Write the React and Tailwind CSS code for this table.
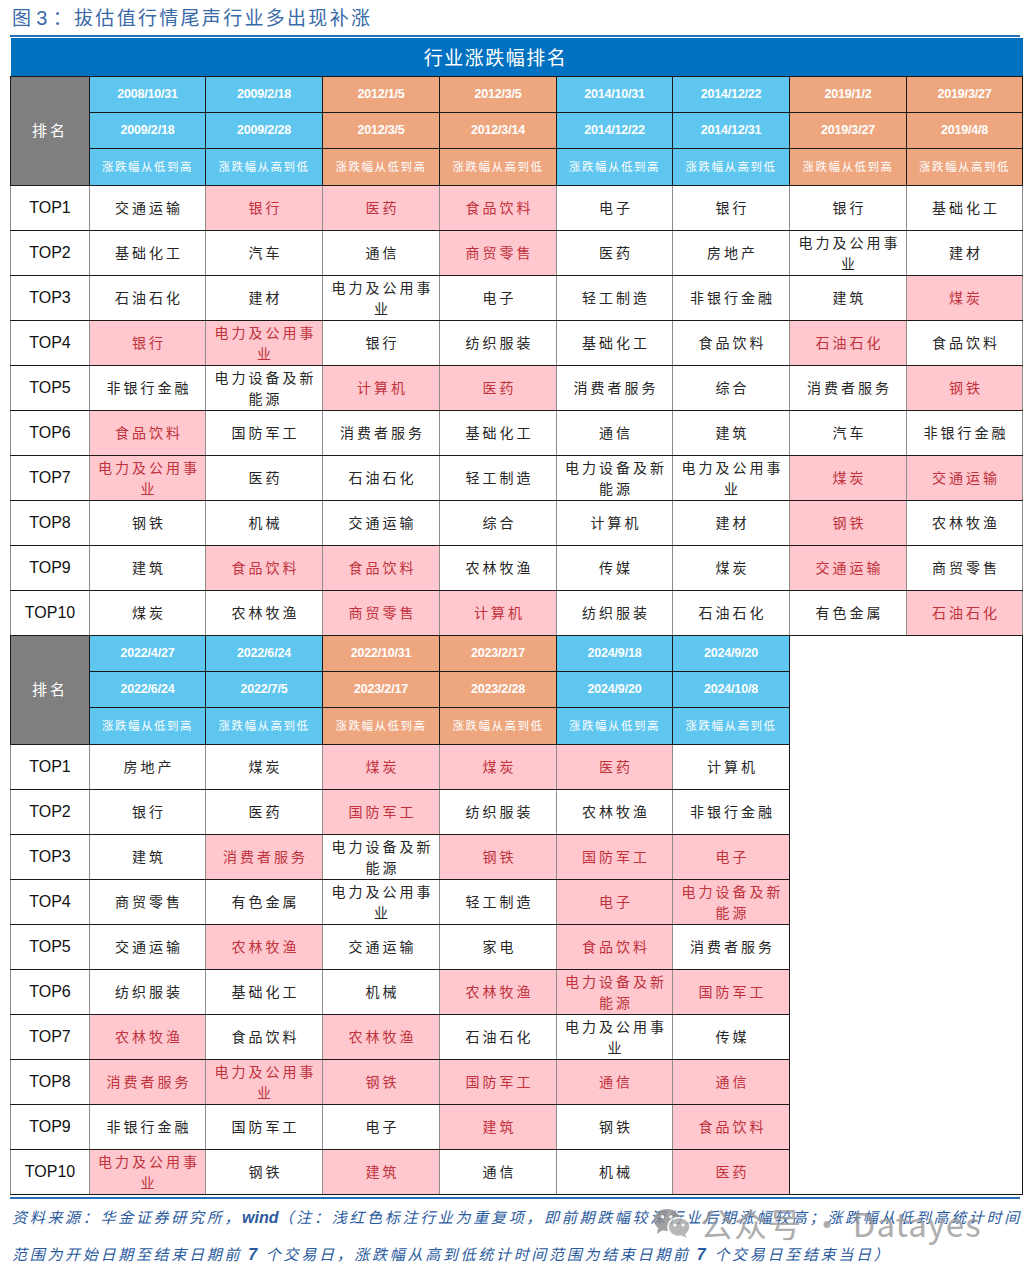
import React from 'react';

const S = '*'; // marks a repeated industry (pink cell)

const sections = [
  {
    cols: [
      { from: '2008/10/31', to: '2009/2/18', up: true, tone: 'blue' },
      { from: '2009/2/18', to: '2009/2/28', up: false, tone: 'blue' },
      { from: '2012/1/5', to: '2012/3/5', up: true, tone: 'orange' },
      { from: '2012/3/5', to: '2012/3/14', up: false, tone: 'orange' },
      { from: '2014/10/31', to: '2014/12/22', up: true, tone: 'blue' },
      { from: '2014/12/22', to: '2014/12/31', up: false, tone: 'blue' },
      { from: '2019/1/2', to: '2019/3/27', up: true, tone: 'orange' },
      { from: '2019/3/27', to: '2019/4/8', up: false, tone: 'orange' },
    ],
    rows: [
      ['交通运输', S + '银行', S + '医药', S + '食品饮料', '电子', '银行', '银行', '基础化工'],
      ['基础化工', '汽车', '通信', S + '商贸零售', '医药', '房地产', '电力及公用事业', '建材'],
      ['石油石化', '建材', '电力及公用事业', '电子', '轻工制造', '非银行金融', '建筑', S + '煤炭'],
      [S + '银行', S + '电力及公用事业', '银行', '纺织服装', '基础化工', '食品饮料', S + '石油石化', '食品饮料'],
      ['非银行金融', '电力设备及新能源', S + '计算机', S + '医药', '消费者服务', '综合', '消费者服务', S + '钢铁'],
      [S + '食品饮料', '国防军工', '消费者服务', '基础化工', '通信', '建筑', '汽车', '非银行金融'],
      [S + '电力及公用事业', '医药', '石油石化', '轻工制造', '电力设备及新能源', '电力及公用事业', S + '煤炭', S + '交通运输'],
      ['钢铁', '机械', '交通运输', '综合', '计算机', '建材', S + '钢铁', '农林牧渔'],
      ['建筑', S + '食品饮料', S + '食品饮料', '农林牧渔', '传媒', '煤炭', S + '交通运输', '商贸零售'],
      ['煤炭', '农林牧渔', S + '商贸零售', S + '计算机', '纺织服装', '石油石化', '有色金属', S + '石油石化'],
    ],
  },
  {
    cols: [
      { from: '2022/4/27', to: '2022/6/24', up: true, tone: 'blue' },
      { from: '2022/6/24', to: '2022/7/5', up: false, tone: 'blue' },
      { from: '2022/10/31', to: '2023/2/17', up: true, tone: 'orange' },
      { from: '2023/2/17', to: '2023/2/28', up: false, tone: 'orange' },
      { from: '2024/9/18', to: '2024/9/20', up: true, tone: 'blue' },
      { from: '2024/9/20', to: '2024/10/8', up: false, tone: 'blue' },
    ],
    rows: [
      ['房地产', '煤炭', S + '煤炭', S + '煤炭', S + '医药', '计算机'],
      ['银行', '医药', S + '国防军工', '纺织服装', '农林牧渔', '非银行金融'],
      ['建筑', S + '消费者服务', '电力设备及新能源', S + '钢铁', S + '国防军工', S + '电子'],
      ['商贸零售', '有色金属', '电力及公用事业', '轻工制造', S + '电子', S + '电力设备及新能源'],
      ['交通运输', S + '农林牧渔', '交通运输', '家电', S + '食品饮料', '消费者服务'],
      ['纺织服装', '基础化工', '机械', S + '农林牧渔', S + '电力设备及新能源', S + '国防军工'],
      [S + '农林牧渔', '食品饮料', S + '农林牧渔', '石油石化', '电力及公用事业', '传媒'],
      [S + '消费者服务', S + '电力及公用事业', S + '钢铁', S + '国防军工', S + '通信', S + '通信'],
      ['非银行金融', '国防军工', '电子', S + '建筑', '钢铁', S + '食品饮料'],
      [S + '电力及公用事业', '钢铁', S + '建筑', '通信', '机械', S + '医药'],
    ],
  },
];

const widths = [79, 116, 117, 117, 117, 116, 117, 117, 116];

const toneBg = { blue: 'bg-[#5ec6ef]', orange: 'bg-[#eea67f]' };

const cjk = "font-['Noto_Sans_CJK_SC',sans-serif]";
const arial = "font-['Liberation_Sans','Noto_Sans_CJK_SC',sans-serif]";

function HeadCell({ tone, children, className = '' }) {
  return (
    <td className={`${toneBg[tone]} border border-[#1a1a1a] text-center text-white p-0 ${className}`}>
      {children}
    </td>
  );
}

function Section({ data }) {
  const extra = 8 - data.cols.length;
  return (
    <>
      <tr className="h-[36px]">
        <td rowSpan={3} className={`bg-[#7f7f7f] border border-[#1a1a1a] text-center text-white text-[15px] tracking-[3px] ${cjk}`}>
          排名
        </td>
        {data.cols.map((c, i) => (
          <HeadCell key={i} tone={c.tone} className={`${arial} font-bold text-[12.5px] tracking-[-0.2px]`}>
            {c.from}
          </HeadCell>
        ))}
        {extra > 0 && <td rowSpan={13} colSpan={extra} className="bg-white border border-[#1a1a1a]" />}
      </tr>
      <tr className="h-[36px]">
        {data.cols.map((c, i) => (
          <HeadCell key={i} tone={c.tone} className={`${arial} font-bold text-[12.5px] tracking-[-0.2px]`}>
            {c.to}
          </HeadCell>
        ))}
      </tr>
      <tr className="h-[37px]">
        {data.cols.map((c, i) => (
          <HeadCell key={i} tone={c.tone} className={`${cjk} text-[11.5px] tracking-[1.5px]`}>
            {c.up ? '涨跌幅从低到高' : '涨跌幅从高到低'}
          </HeadCell>
        ))}
      </tr>
      {data.rows.map((row, r) => (
        <tr key={r} className="h-[45px]">
          <td className={`border-y border-y-[#1a1a1a] border-x border-x-[#8c8c8c] bg-white text-center text-[16px] text-[#111] ${arial}`}>
            TOP{r + 1}
          </td>
          {row.map((name, i) => {
            const hot = name.startsWith(S);
            const label = hot ? name.slice(1) : name;
            return (
              <td
                key={i}
                className={`border-y border-y-[#1a1a1a] border-x border-x-[#8c8c8c] text-center px-[4px] pl-[7px] text-[14px] leading-[21px] tracking-[3px] ${cjk} ${
                  hot ? 'bg-[#ffc7ce] text-[#c0323c]' : 'bg-white text-[#262626]'
                }`}
              >
                {label}
              </td>
            );
          })}
        </tr>
      ))}
    </>
  );
}

function WeChatMark() {
  return (
    <svg width="40" height="32" viewBox="0 0 40 32" className="shrink-0">
      <ellipse cx="15" cy="13" rx="13" ry="11" fill="#8c8c8c" />
      <path d="M6 21 L5 27 L11 23 Z" fill="#8c8c8c" />
      <ellipse cx="27" cy="20" rx="11" ry="9.5" fill="#a6a6a6" stroke="#fff" strokeWidth="1.5" />
      <path d="M33 27 L35 31 L29 28 Z" fill="#a6a6a6" />
      <circle cx="10.5" cy="10" r="1.8" fill="#fff" />
      <circle cx="19" cy="10" r="1.8" fill="#fff" />
      <circle cx="23" cy="18" r="1.5" fill="#fff" />
      <circle cx="31" cy="18" r="1.5" fill="#fff" />
    </svg>
  );
}

export default function App() {
  return (
    <div className="w-[1030px] h-[1269px] bg-white overflow-hidden">
      {/* Figure title */}
      <div className={`h-[35px] pl-[12px] flex items-center text-[#3a6aa8] text-[19px] tracking-[2.3px] ${cjk}`}>
        图 <span className={`${arial} mx-[3px] text-[20px]`}>3</span>：拔估值行情尾声行业多出现补涨
      </div>
      <div className="mx-[10px] h-[2px] bg-[#2a70b8]" />

      {/* Ranking table */}
      <table className="ml-[10px] mt-[1px] w-[1012px] table-fixed border-collapse">
        <colgroup>
          {widths.map((w, i) => (
            <col key={i} style={{ width: w }} />
          ))}
        </colgroup>
        <tbody>
          <tr className="h-[38px]">
            <td colSpan={9} className={`bg-[#0070c0] text-white text-center text-[19px] tracking-[1.5px] pr-[42px] ${cjk}`}>
              行业涨跌幅排名
            </td>
          </tr>
          <Section data={sections[0]} />
          <Section data={sections[1]} />
        </tbody>
      </table>

      {/* Source note */}
      <div className="mx-[10px] mt-[2px] h-[2px] bg-[#2a70b8]" />
      <div className={`relative pl-[12px] pt-0 text-[#2a5a9e] italic text-[15px] leading-[36px] tracking-[2.7px] whitespace-nowrap ${cjk}`}>
        <div>
          资料来源：华金证券研究所，<span className={`${arial} font-bold text-[16px] tracking-normal`}>wind</span>（注：浅红色标注行业为重复项，即前期跌幅较深行业后期涨幅较高；涨跌幅从低到高统计时间
        </div>
        <div>
          范围为开始日期至结束日期前 <span className={`${arial} font-bold text-[16px]`}>7</span> 个交易日，涨跌幅从高到低统计时间范围为结束日期前 <span className={`${arial} font-bold text-[16px]`}>7</span> 个交易日至结束当日）
        </div>
        <div className="absolute left-[652px] top-[6px] flex items-center gap-[8px] opacity-80 not-italic">
          <WeChatMark />
          <span className={`text-[33px] tracking-[1px] text-[#9a9a9a] not-italic ${cjk}`}>公众号 · Datayes</span>
        </div>
      </div>
    </div>
  );
}
